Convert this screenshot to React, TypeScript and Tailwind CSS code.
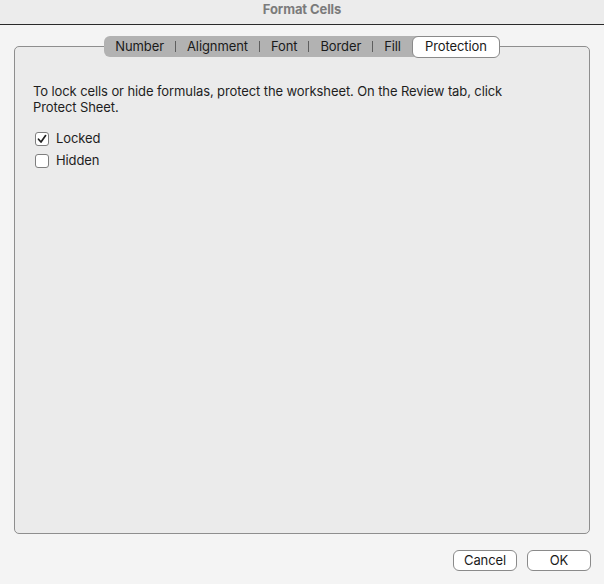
import { useState } from 'react'

const tabs = ['Number', 'Alignment', 'Font', 'Border', 'Fill']

function Checkbox({ checked, label, onToggle }: { checked: boolean; label: string; onToggle: () => void }) {
  return (
    <label className="flex items-center gap-[7px] h-[22px] cursor-default" onClick={onToggle}>
      <span className="w-[14px] h-[14px] rounded-[3px] border border-[#7e7e7e] bg-white flex items-center justify-center">
        {checked && (
          <svg width="10" height="10" viewBox="0 0 10 10" fill="none">
            <path d="M1.5 5.2 L4 8 L8.6 1.6" stroke="#1f1f1f" strokeWidth="1.7" strokeLinecap="round" strokeLinejoin="round" />
          </svg>
        )}
      </span>
      <span className="text-[13px] text-[#1e1e1e]">{label}</span>
    </label>
  )
}

export default function App() {
  const [locked, setLocked] = useState(true)
  const [hidden, setHidden] = useState(false)

  return (
    <div
      className="w-[604px] h-[584px] flex flex-col bg-[#f4f4f4] overflow-hidden tracking-[-0.1px]"
      style={{ fontFamily: 'Inter, "Liberation Sans", sans-serif' }}
    >
      {/* Title bar */}
      <div className="h-[25px] shrink-0 bg-[#ececec] border-b border-[#2a2a2a] flex justify-center pt-[1px]">
        <span className="text-[13px] leading-[16px] font-bold text-[#7b7b7b]">Format Cells</span>
      </div>

      {/* Tab panel */}
      <div className="mt-[21px] mx-[14px] h-[488px] border border-[#8e8e8e] rounded-[5px] bg-[#ebebeb] flex flex-col">
        <div className="-mt-[11px] flex justify-center">
          <div className="h-[21px] flex items-center bg-[#b2b2b2] rounded-[6px] text-[13px] text-[#1a1a1a]">
            {tabs.map((t, i) => (
              <div key={t} className="flex items-center">
                {i > 0 && <span className="w-px h-[11px] bg-[#5e5e5e]" />}
                <span className="px-[11px]">{t}</span>
              </div>
            ))}
            <div className="h-[22px] px-[12px] flex items-center bg-white border border-[#8a8a8a] rounded-[6px]">
              Protection
            </div>
          </div>
        </div>

        <div className="px-[18px] pt-[26px] text-[13px] text-[#1e1e1e]">
          <p className="leading-[16px] w-[490px]">
            To lock cells or hide formulas, protect the worksheet. On the Review tab, click Protect Sheet.
          </p>
          <div className="mt-[13px] pl-[2px] flex flex-col">
            <Checkbox checked={locked} label="Locked" onToggle={() => setLocked(!locked)} />
            <Checkbox checked={hidden} label="Hidden" onToggle={() => setHidden(!hidden)} />
          </div>
        </div>
      </div>

      {/* Buttons */}
      <div className="mt-[16px] pr-[13px] flex justify-end gap-[10px]">
        <button className="w-[64px] h-[21px] bg-white border border-[#8a8a8a] rounded-[6px] text-[13px] text-[#1a1a1a]">
          Cancel
        </button>
        <button className="w-[64px] h-[21px] bg-white border border-[#8a8a8a] rounded-[6px] text-[13px] text-[#1a1a1a]">
          OK
        </button>
      </div>
    </div>
  )
}
